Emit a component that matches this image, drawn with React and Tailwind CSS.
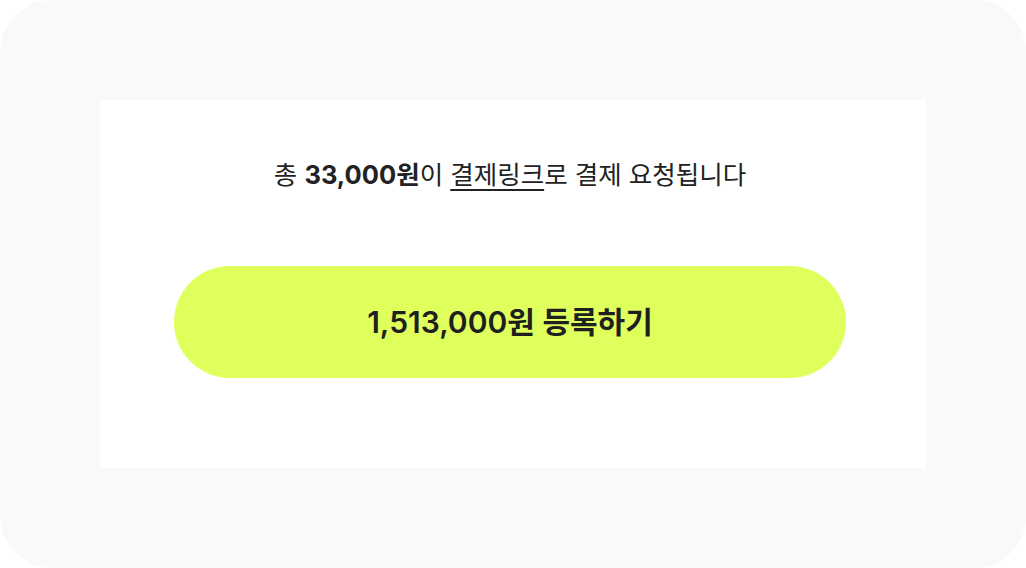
export default function App() {
  return (
    <div
      className="w-[1026px] h-[568px] bg-[#f8f9fb] rounded-[52px] p-[100px] box-border"
      style={{ fontFamily: '"Inter", "Noto Sans CJK KR", sans-serif' }}
    >
      <div className="w-[826px] h-[368px] bg-white flex flex-col items-center pt-[58px] pr-[6px]">
        <p className="text-[25.5px] leading-[34px] text-[#222222]">
          총 <span className="font-bold">33,000원</span>이{" "}
          <span className="underline decoration-[1.5px] underline-offset-[5px]">결제링크</span>로 결제 요청됩니다
        </p>
        <button className="mt-[74px] w-[672px] h-[112px] rounded-full bg-[#dfff5c] flex items-center justify-center text-[30px] font-semibold text-[#1f1f1f]">
          1,513,000원 등록하기
        </button>
      </div>
    </div>
  );
}
